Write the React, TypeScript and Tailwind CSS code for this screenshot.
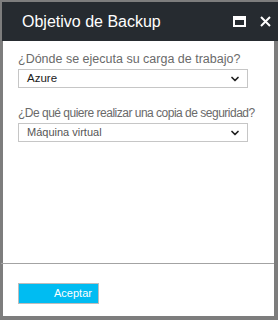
import { ChevronDown } from "lucide-react";

function Select({ value, dark }: { value: string; dark?: boolean }) {
  return (
    <div className="flex h-[19px] items-center justify-between border border-[#c6c6c6] bg-white pl-2 pr-[6px]">
      <span className={dark ? "text-[11.5px] text-[#1a1a1a]" : "text-[11px] text-[#555]"}>{value}</span>
      <ChevronDown size={12} strokeWidth={3.5} className="text-[#222]" />
    </div>
  );
}

export default function App() {
  return (
    <div
      className="flex h-[320px] w-[278px] flex-col bg-[#7d7d7d] pt-[2px]"
      style={{ fontFamily: '"Liberation Sans", Arial, sans-serif' }}
    >
      <div className="ml-[2px] flex h-[39px] shrink-0 items-center justify-between bg-[#262b30] pl-[20px] pr-[7px]">
        <h1 className="text-[16px] font-normal leading-none text-white">Objetivo de Backup</h1>
        <div className="flex items-center gap-[14px]">
          <div className="h-[11px] w-[13px] border-[2px] border-t-[4px] border-white" />
          <svg width="11" height="11" viewBox="0 0 11 11">
            <path d="M1 1 L10 10 M10 1 L1 10" stroke="white" strokeWidth="2" />
          </svg>
        </div>
      </div>

      <div className="mb-[4px] ml-[3px] mr-[4px] flex flex-1 flex-col bg-white">
        <div className="flex flex-1 flex-col pl-[15px] pr-[26px] pt-[10px]">
          <label className="whitespace-nowrap text-[12.5px] leading-[16px] text-[#6a6a6a]">
            ¿Dónde se ejecuta su carga de trabajo?
          </label>
          <div className="mt-[2px]">
            <Select value="Azure" dark />
          </div>
          <label className="mt-[17px] whitespace-nowrap text-[12px] leading-[16px] tracking-[-0.5px] text-[#6a6a6a]">
            ¿De qué quiere realizar una copia de seguridad?
          </label>
          <div className="mt-[2px]">
            <Select value="Máquina virtual" />
          </div>
        </div>
        <div className="-ml-[2px] h-px bg-[#a3a3a3]" />
        <div className="h-[52px] px-[15px] pt-[16px]">
          <button className="h-[21px] w-[81px] border border-[#bdbdbd] bg-[#00bcf2] pl-[35px] text-left text-[11px] text-white">
            Aceptar
          </button>
        </div>
      </div>
    </div>
  );
}
